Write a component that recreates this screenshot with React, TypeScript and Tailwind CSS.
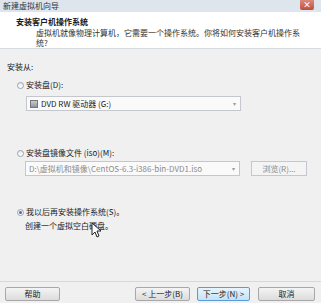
import React from 'react';

const Radio: React.FC<{ checked?: boolean }> = ({ checked }) => (
    <span className="w-[7px] h-[7px] rounded-full border border-[#9aa3ad] bg-gradient-to-b from-[#e6e9ec] to-[#ffffff] flex items-center justify-center shrink-0">
        {checked && <span className="w-[3px] h-[3px] rounded-full bg-[#3f6fb0]" />}
    </span>
);

const Combo: React.FC<{ children: React.ReactNode, disabled?: boolean }> = ({ children, disabled }) => (
    <div className="w-[215px] h-[15px] border border-[#c4c8cc] bg-[#fafafa] flex items-center pl-[3px] pr-[4px]">
        <div className={`flex-1 flex items-center gap-[3px] whitespace-nowrap ${disabled ? 'text-[#8a8a8a]' : 'text-[#222]'}`}>{children}</div>
        <span className="text-[6px] text-[#9a9a9a]">▾</span>
    </div>
);

const Btn: React.FC<{ label: string, w: string, primary?: boolean }> = ({ label, w, primary }) => (
    <div className={`${w} h-[14px] flex items-center justify-center border rounded-[2px] ${primary ? 'border-[#5a9bd6] bg-gradient-to-b from-[#e8f4fc] to-[#c4e2f7]' : 'border-[#a8a8a8] bg-gradient-to-b from-[#f4f4f4] to-[#dcdcdc]'}`}>
        {label}
    </div>
);

export default function App() {
    return (
        <div className="w-[321px] h-[303px] bg-[#f0f0f0] flex flex-col text-[8px] leading-none text-[#1a1a1a] overflow-hidden" style={{ fontFamily: '"Noto Sans CJK SC", "Liberation Sans", sans-serif' }}>
            <div className="h-[12px] bg-[#dfe5ec] flex items-center justify-between pl-[3px] pr-[7px] text-[#333]">
                <span>新建虚拟机向导</span>
                <span className="w-[14px] h-[10px] -mt-[2px] rounded-b-[2px] bg-gradient-to-b from-[#d98a7a] to-[#c34a38] text-white text-[8px] flex items-center justify-center font-bold">×</span>
            </div>
            <div className="h-[37px] bg-white border-b border-[#d6dbe0] pl-[16px] pt-[6px] flex flex-col">
                <span className="font-bold">安装客户机操作系统</span>
                <span className="pl-[20px] mt-[2px] leading-[10px] text-[#333]">虚拟机就像物理计算机，它需要一个操作系统。你将如何安装客户机操作系<br />统?</span>
            </div>
            <div className="flex-1 flex flex-col pl-[7px]">
                <span className="mt-[14px]">安装从:</span>
                <div className="mt-[10px] ml-[10px] flex items-center gap-[2px]">
                    <Radio />
                    <span>安装盘(D):</span>
                </div>
                <div className="mt-[7px] ml-[19px]">
                    <Combo>
                        <span className="w-[8px] h-[8px] bg-gradient-to-b from-[#c9ced3] to-[#8e959c] border border-[#777] shrink-0" />
                        <span>DVD RW 驱动器 (G:)</span>
                    </Combo>
                </div>
                <div className="mt-[38px] ml-[10px] flex items-center gap-[2px]">
                    <Radio />
                    <span>安装盘镜像文件 (iso)(M):</span>
                </div>
                <div className="mt-[4px] ml-[18px] flex items-center gap-[11px]">
                    <Combo disabled>
                        <span>D:\虚拟机和镜像\CentOS-6.3-i386-bin-DVD1.iso</span>
                    </Combo>
                    <div className="w-[56px] h-[15px] border border-[#c4c8cc] bg-[#f4f4f4] text-[#8a8a8a] flex items-center justify-center whitespace-nowrap">浏览(R)...</div>
                </div>
                <div className="mt-[32px] ml-[10px] flex items-center gap-[2px]">
                    <Radio checked />
                    <span>我以后再安装操作系统(S)。</span>
                </div>
                <div className="mt-[6px] ml-[18px] relative">
                    <span>创建一个虚拟空白硬盘。</span>
                    <svg className="absolute left-[66px] top-[0px]" width="10" height="16" viewBox="0 0 10 16">
                        <path d="M1 1 L1 13 L4 10 L6 15 L8 14 L6 9 L10 9 Z" fill="white" stroke="#222" strokeWidth="1" />
                    </svg>
                </div>
            </div>
            <div className="h-[22px] border-t border-[#d8d8d8] flex items-start pt-[5px] px-[5px] text-[#222]">
                <Btn label="帮助" w="w-[55px]" />
                <div className="flex-1" />
                <Btn label="< 上一步(B)" w="w-[55px]" />
                <div className="w-[7px]" />
                <Btn label="下一步(N) >" w="w-[53px]" primary />
                <div className="w-[8px]" />
                <Btn label="取消" w="w-[57px]" />
                <div className="w-[1px]" />
            </div>
        </div>
    );
}
